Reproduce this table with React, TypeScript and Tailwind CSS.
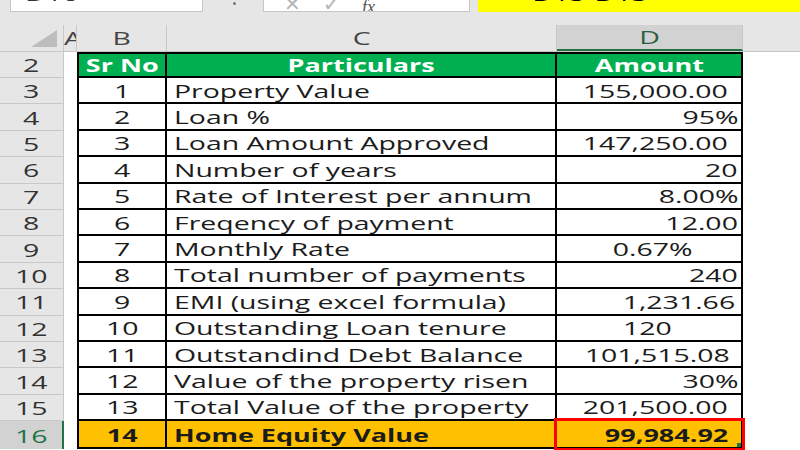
import React from 'react';

interface Row {
  n: number;
  sr: number;
  label: string;
  value: string;
  pr: string;
}

const rows: Row[] = [
  { n: 3, sr: 1, label: 'Property Value', value: '155,000.00', pr: 'pr-[13px]' },
  { n: 4, sr: 2, label: 'Loan %', value: '95%', pr: 'pr-[3px]' },
  { n: 5, sr: 3, label: 'Loan Amount Approved', value: '147,250.00', pr: 'pr-[13px]' },
  { n: 6, sr: 4, label: 'Number of years', value: '20', pr: 'pr-[3px]' },
  { n: 7, sr: 5, label: 'Rate of Interest per annum', value: '8.00%', pr: 'pr-[3px]' },
  { n: 8, sr: 6, label: 'Freqency of payment', value: '12.00', pr: 'pr-[3px]' },
  { n: 9, sr: 7, label: 'Monthly Rate', value: '0.67%', pr: 'pr-[49px]' },
  { n: 10, sr: 8, label: 'Total number of payments', value: '240', pr: 'pr-[3px]' },
  { n: 11, sr: 9, label: 'EMI (using excel formula)', value: '1,231.66', pr: 'pr-[6px]' },
  { n: 12, sr: 10, label: 'Outstanding Loan tenure', value: '120', pr: 'pr-[69px]' },
  { n: 13, sr: 11, label: 'Outstandind Debt Balance', value: '101,515.08', pr: 'pr-[11px]' },
  { n: 14, sr: 12, label: 'Value of the property risen', value: '30%', pr: 'pr-[3px]' },
  { n: 15, sr: 13, label: 'Total Value of the property', value: '201,500.00', pr: 'pr-[13px]' },
];

// the screenshot is stretched sideways, so every text is widened the same way
function Txt({ children, origin = 'origin-left', bold = false }: { children: React.ReactNode; origin?: string; bold?: boolean }) {
  return <span className={`inline-block ${bold ? 'scale-x-[1.5]' : 'scale-x-[1.58]'} ${origin}`}>{children}</span>;
}

export default function App() {
  return (
    <div className="w-[800px] h-[450px] overflow-hidden bg-white font-['Open_Sans',sans-serif] text-[18px] text-[#1b1b1b]">
      {/* formula bar, cut off at the top */}
      <div className="h-[25px] bg-[#e6e6e6] flex items-start">
        <div className="ml-[10px] w-[193px] h-[12px] bg-white border border-t-0 border-[#c6c6c6] overflow-hidden">
          <div className="-mt-[19px] ml-[14px] text-[#333]"><Txt>D16</Txt></div>
        </div>
        <div className="ml-[28px] w-[6px] flex justify-center pt-[2px]">
          <div className="w-[3px] h-[3px] rounded-full bg-[#777]"></div>
        </div>
        <div className="ml-[26px] w-[207px] h-[12px] bg-white border border-t-0 border-[#c6c6c6] overflow-hidden flex items-end gap-[22px] pl-[20px] text-[#b5b5b5]">
          <span className="-mb-[8px] text-[20px]">✕</span>
          <span className="-mb-[8px] text-[20px]">✓</span>
          <span className="-mb-[10px] italic text-[#555] font-['Liberation_Serif',serif]">fx</span>
        </div>
        <div className="ml-[8px] flex-1 h-[12px] bg-[#ffff00] overflow-hidden">
          <div className="-mt-[19px] ml-[38px] text-black"><Txt>=D15-D13</Txt></div>
        </div>
      </div>

      {/* column headers */}
      <div className="h-[27px] flex bg-[#e6e6e6] border-b border-[#c8c8c8] text-[#444]">
        <div className="w-[64px] border-r border-[#c8c8c8] flex items-end justify-end pr-[6px] pb-[4px]">
          <div className="w-0 h-0 border-l-[26px] border-l-transparent border-b-[17px] border-b-[#bdbdbd]"></div>
        </div>
        <div className="w-[13px] border-r border-[#c8c8c8] overflow-hidden flex items-center">
          <Txt>A</Txt>
        </div>
        <div className="w-[90px] border-r border-[#c8c8c8] flex items-center justify-center">
          <Txt origin="origin-center">B</Txt>
        </div>
        <div className="w-[390px] border-r border-[#c8c8c8] flex items-center justify-center">
          <Txt origin="origin-center">C</Txt>
        </div>
        <div className="w-[186px] bg-[#d2d2d2] border-b-2 border-[#217346] border-r border-r-[#c8c8c8] flex items-center justify-center text-[#2b5d45]">
          <Txt origin="origin-center">D</Txt>
        </div>
        <div className="flex-1"></div>
      </div>

      {/* header row 2 */}
      <div className="h-[26px] flex">
        <div className="w-[64px] bg-[#e6e6e6] border-r border-b border-[#c8c8c8] flex items-center justify-center pt-[2px] text-[#333]">
          <Txt origin="origin-center">2</Txt>
        </div>
        <div className="w-[13px]"></div>
        <div className="w-[90px] bg-[#00b050] border-2 border-black flex items-center justify-center pt-[1px] font-bold text-white">
          <Txt origin="origin-center" bold>Sr No</Txt>
        </div>
        <div className="w-[390px] bg-[#00b050] border-y-2 border-r-2 border-black flex items-center justify-center pt-[1px] font-bold text-white">
          <Txt origin="origin-center" bold>Particulars</Txt>
        </div>
        <div className="w-[186px] bg-[#00b050] border-y-2 border-r-2 border-black flex items-center justify-center pt-[1px] font-bold text-white">
          <Txt origin="origin-center" bold>Amount</Txt>
        </div>
      </div>

      {rows.map((r) => (
        <div key={r.n} className="h-[26.4px] flex">
          <div className="w-[64px] bg-[#e6e6e6] border-r border-b border-[#c8c8c8] flex items-center justify-center pt-[2px] text-[#333]">
            <Txt origin="origin-center">{r.n}</Txt>
          </div>
          <div className="w-[13px]"></div>
          <div className="w-[90px] border-x-2 border-b-2 border-black flex items-center justify-center pt-[2px]">
            <Txt origin="origin-center">{r.sr}</Txt>
          </div>
          <div className="w-[390px] border-r-2 border-b-2 border-black flex items-center pl-[7px] pt-[2px]">
            <Txt>{r.label}</Txt>
          </div>
          <div className={`w-[186px] border-r-2 border-b-2 border-black flex items-center justify-end pt-[2px] ${r.pr}`}>
            <Txt origin="origin-right">{r.value}</Txt>
          </div>
        </div>
      ))}

      {/* row 16 */}
      <div className="h-[28px] flex font-bold">
        <div className="w-[64px] bg-[#d2d2d2] border-r-2 border-[#217346] flex items-center justify-center pt-[2px] text-[#217346] font-normal">
          <Txt origin="origin-center">16</Txt>
        </div>
        <div className="w-[13px]"></div>
        <div className="w-[90px] bg-[#ffc000] border-x-2 border-b-2 border-black flex items-center justify-center pt-[2px]">
          <Txt origin="origin-center" bold>14</Txt>
        </div>
        <div className="w-[390px] bg-[#ffc000] border-r-2 border-b-2 border-black flex items-center pl-[7px] pt-[2px]">
          <Txt bold>Home Equity Value</Txt>
        </div>
        <div className="relative w-[186px] bg-[#ffc000] border-r-2 border-b-2 border-black flex items-center justify-end pr-[13px] pt-[2px]">
          <Txt origin="origin-right" bold>99,984.92</Txt>
          <div className="absolute -top-[3px] -left-[3px] -right-[4px] -bottom-[4px] border-[3px] border-[#ff0000]"></div>
          <div className="absolute right-0 bottom-0 w-[4px] h-[4px] bg-[#217346]"></div>
        </div>
      </div>
    </div>
  );
}
